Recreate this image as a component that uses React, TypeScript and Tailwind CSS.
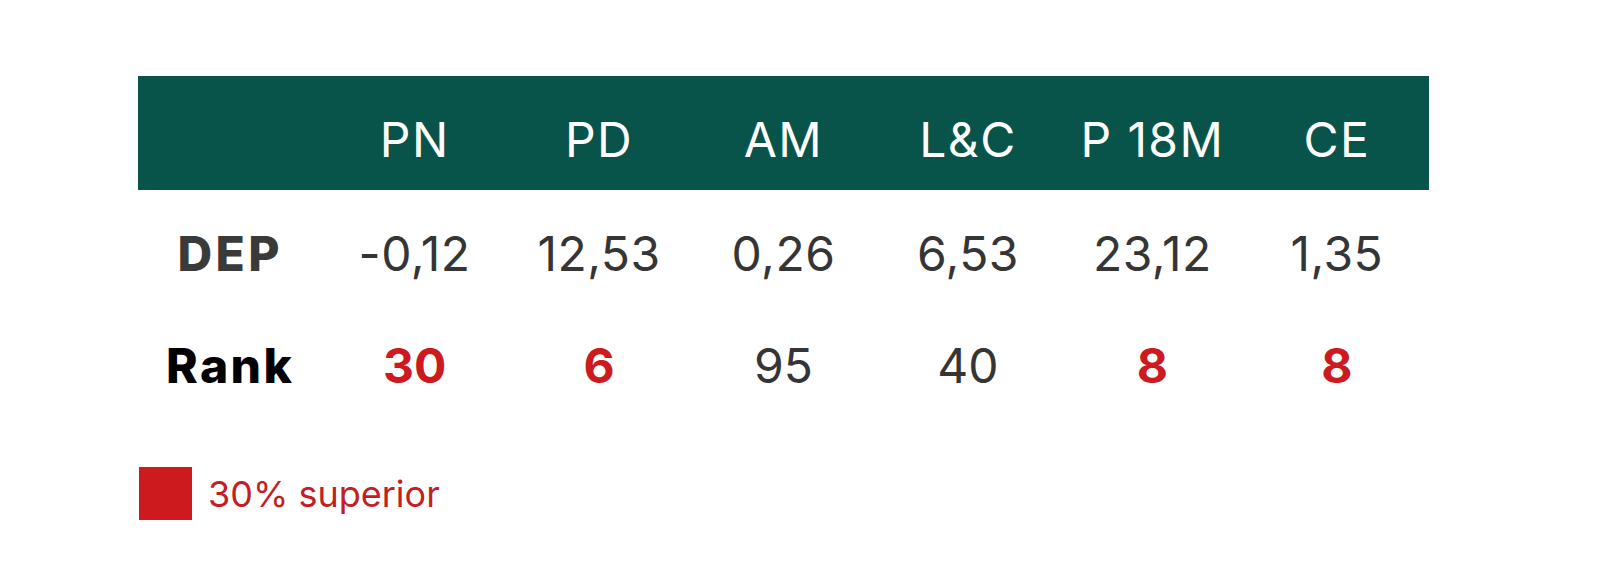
import React from "react";

const cols = ["PN", "PD", "AM", "L&C", "P 18M", "CE"];
const dep = ["-0,12", "12,53", "0,26", "6,53", "23,12", "1,35"];
const rank: { v: string; top: boolean }[] = [
  { v: "30", top: true },
  { v: "6", top: true },
  { v: "95", top: false },
  { v: "40", top: false },
  { v: "8", top: true },
  { v: "8", top: true },
];

export default function App() {
  return (
    <div
      className="w-[1600px] h-[573px] bg-white overflow-hidden"
      style={{ fontFamily: "Inter, 'Noto Sans', sans-serif" }}
    >
      <div className="ml-[138px] pt-[76px] w-[1291px]">
        <div className="grid grid-cols-7 h-[114px] bg-[#08544a] text-white text-[48px] items-center">
          <div />
          {cols.map((c) => (
            <div key={c} className="text-center pt-[14px] leading-none tracking-[0.03em]">
              {c}
            </div>
          ))}
        </div>
        <div className="grid grid-cols-7 h-[126px] items-center text-[48px] text-[#353535] leading-none">
          <div className="text-center font-extrabold text-[#3a3a3a] pt-[2px] tracking-[0.07em]">DEP</div>
          {dep.map((d, i) => (
            <div key={i} className="text-center pt-[2px] tracking-[0.01em]">
              {d}
            </div>
          ))}
        </div>
        <div className="grid grid-cols-7 h-[114px] items-center text-[48px] leading-none pb-[14px]">
          <div className="text-center font-extrabold text-black tracking-[0.05em]">Rank</div>
          {rank.map((r, i) => (
            <div
              key={i}
              className={
                r.top
                  ? "text-center font-bold text-[#cc1a20]"
                  : "text-center text-[#353535]"
              }
            >
              {r.v}
            </div>
          ))}
        </div>
        <div className="flex items-center gap-[16px] mt-[37px] ml-[1px]">
          <div className="w-[53px] h-[53px] bg-[#cc1a1f]" />
          <div className="text-[36px] text-[#c41e24] leading-none">30% superior</div>
        </div>
      </div>
    </div>
  );
}
